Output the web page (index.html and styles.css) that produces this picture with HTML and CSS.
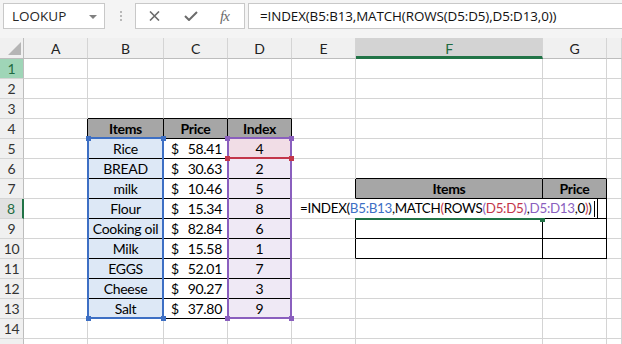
FILE: index.html
```html
<!DOCTYPE html>
<html>
<head>
<title>LOOKUP</title>
<link rel="stylesheet" href="styles.css">
</head>
<body>

<div class="fbar">
  <div class="namebox"><span>LOOKUP</span><span class="caret"></span></div>
  <div class="grip">
    <svg width="3" height="11" viewBox="0 0 3 11"><rect x="0" y="0" width="2" height="2" fill="#b8b8b8"/><rect x="0" y="4" width="2" height="2" fill="#b8b8b8"/><rect x="0" y="8" width="2" height="2" fill="#b8b8b8"/></svg>
  </div>
  <div class="fnbtns">
    <svg class="ico-x" width="11" height="10" viewBox="0 0 11 10"><path d="M1 0.5 L10 9.5 M10 0.5 L1 9.5" stroke="#6b6b6b" stroke-width="1.6" fill="none"/></svg>
    <svg class="ico-ok" width="14" height="10" viewBox="0 0 14 10"><path d="M1 5 L5 9 L13 1" stroke="#6b6b6b" stroke-width="2" fill="none"/></svg>
    <i class="ico-fx">fx</i>
  </div>
  <div class="fxinput">=INDEX(B5:B13,MATCH(ROWS(D5:D5),D5:D13,0))</div>
</div>

<div class="sheet">
  <div class="grid">
    <!-- column headings -->
    <div class="corner"><span class="tri"></span></div>
    <div class="ch">A</div><div class="ch">B</div><div class="ch">C</div><div class="ch">D</div>
    <div class="ch">E</div><div class="ch ch-sel">F</div><div class="ch">G</div><div class="ch"></div>

    <!-- 1 -->
    <div class="rh rh-hl">1</div>
    <div class="c"></div><div class="c"></div><div class="c"></div><div class="c"></div><div class="c"></div><div class="c"></div><div class="c"></div><div class="c"></div>
    <!-- 2 -->
    <div class="rh">2</div>
    <div class="c"></div><div class="c"></div><div class="c"></div><div class="c"></div><div class="c"></div><div class="c"></div><div class="c"></div><div class="c"></div>
    <!-- 3 -->
    <div class="rh">3</div>
    <div class="c"></div><div class="c bb"></div><div class="c bb"></div><div class="c bb"></div><div class="c"></div><div class="c"></div><div class="c"></div><div class="c"></div>
    <!-- 4 -->
    <div class="rh">4</div>
    <div class="c br"></div><div class="c tc th">Items</div><div class="c tc th">Price</div><div class="c tc th">Index</div><div class="c"></div><div class="c"></div><div class="c"></div><div class="c"></div>
    <!-- 5 -->
    <div class="rh">5</div>
    <div class="c br"></div><div class="c tc item">Rice</div><div class="c tc money"><span>$</span><span>58.41</span></div><div class="c tc idx idx-sel">4</div><div class="c"></div><div class="c"></div><div class="c"></div><div class="c"></div>
    <!-- 6 -->
    <div class="rh">6</div>
    <div class="c br"></div><div class="c tc item">BREAD</div><div class="c tc money"><span>$</span><span>30.63</span></div><div class="c tc idx">2</div><div class="c"></div><div class="c bb"></div><div class="c bb"></div><div class="c"></div>
    <!-- 7 -->
    <div class="rh">7</div>
    <div class="c br"></div><div class="c tc item">milk</div><div class="c tc money"><span>$</span><span>10.46</span></div><div class="c tc idx">5</div><div class="c br"></div><div class="c tc th">Items</div><div class="c tc th">Price</div><div class="c"></div>
    <!-- 8 -->
    <div class="rh rh-act">8</div>
    <div class="c br"></div><div class="c tc item">Flour</div><div class="c tc money"><span>$</span><span>15.34</span></div><div class="c tc idx">8</div><div class="c br"></div><div class="c tc"></div><div class="c tc"></div><div class="c"></div>
    <!-- 9 -->
    <div class="rh">9</div>
    <div class="c br"></div><div class="c tc item">Cooking oil</div><div class="c tc money"><span>$</span><span>82.84</span></div><div class="c tc idx">6</div><div class="c br"></div><div class="c tc"></div><div class="c tc"></div><div class="c"></div>
    <!-- 10 -->
    <div class="rh">10</div>
    <div class="c br"></div><div class="c tc item">Milk</div><div class="c tc money"><span>$</span><span>15.58</span></div><div class="c tc idx">1</div><div class="c br"></div><div class="c tc"></div><div class="c tc"></div><div class="c"></div>
    <!-- 11 -->
    <div class="rh">11</div>
    <div class="c br"></div><div class="c tc item">EGGS</div><div class="c tc money"><span>$</span><span>52.01</span></div><div class="c tc idx">7</div><div class="c"></div><div class="c"></div><div class="c"></div><div class="c"></div>
    <!-- 12 -->
    <div class="rh">12</div>
    <div class="c br"></div><div class="c tc item">Cheese</div><div class="c tc money"><span>$</span><span>90.27</span></div><div class="c tc idx">3</div><div class="c"></div><div class="c"></div><div class="c"></div><div class="c"></div>
    <!-- 13 -->
    <div class="rh">13</div>
    <div class="c br"></div><div class="c tc item">Salt</div><div class="c tc money"><span>$</span><span>37.80</span></div><div class="c tc idx">9</div><div class="c"></div><div class="c"></div><div class="c"></div><div class="c"></div>
    <!-- 14 -->
    <div class="rh">14</div>
    <div class="c"></div><div class="c"></div><div class="c"></div><div class="c"></div><div class="c"></div><div class="c"></div><div class="c"></div><div class="c"></div>
    <!-- 15 -->
    <div class="rh">15</div>
    <div class="c"></div><div class="c"></div><div class="c"></div><div class="c"></div><div class="c"></div><div class="c"></div><div class="c"></div><div class="c"></div>
  </div>

  <!-- range highlights while editing -->
  <div class="rng rng-red"></div>
  <div class="rng rng-blue"></div>
  <div class="rng rng-purple"></div>
  <span class="hdl hdl-blue" style="left:86px;top:98px"></span>
  <span class="hdl hdl-blue" style="left:161px;top:98px"></span>
  <span class="hdl hdl-blue" style="left:86px;top:278px"></span>
  <span class="hdl hdl-blue" style="left:161px;top:278px"></span>
  <span class="hdl hdl-purple" style="left:225px;top:98px"></span>
  <span class="hdl hdl-purple" style="left:289px;top:98px"></span>
  <span class="hdl hdl-purple" style="left:225px;top:278px"></span>
  <span class="hdl hdl-purple" style="left:289px;top:278px"></span>
  <span class="hdl hdl-red" style="left:225px;top:118px"></span>
  <span class="hdl hdl-red" style="left:289px;top:118px"></span>

  <div class="active"></div>
  <div class="edit">=INDEX(<span class="r-blue">B5:B13</span>,MATCH<span class="r-red">(</span>ROWS<span class="r-purple">(</span><span class="r-red">D5:D5</span><span class="r-purple">)</span>,<span class="r-purple">D5:D13</span>,0<span class="r-red">)</span>)<span class="cursor"></span></div>
</div>

</body>
</html>
```

FILE: styles.css
```css
* {box-sizing: border-box;}
body {margin: 0; width: 622px; height: 344px; overflow: hidden; background: #fff; font-family: Lato, "Liberation Sans", sans-serif; color: #000;}

.fbar {display: flex; align-items: flex-start; height: 38px; padding: 3px 0 0 3px; background: #f4f4f4; font-family: "Open Sans", "Noto Sans", sans-serif;}
.namebox {width: 102px; height: 26px; background: #fff; border: 1px solid #c8c8c8; display: flex; align-items: center; justify-content: space-between; padding: 0 7px 0 8px; font-size: 13.5px; color: #262626;}
.caret {width: 0; height: 0; border-left: 4px solid transparent; border-right: 4px solid transparent; border-top: 4px solid #808080; margin-top: 1px;}
.grip {width: 30px; height: 26px; display: flex; align-items: center; justify-content: center; padding-left: 2px;}
.fnbtns {width: 110px; height: 26px; background: #fff; border: 1px solid #c8c8c8; display: flex; align-items: center; padding-left: 13px;}
.ico-ok {margin-left: 24px;}
.ico-fx {margin-left: 22px; font-family: "Liberation Serif", serif; font-size: 15px; color: #6b6b6b; letter-spacing: -1px;}
.fxinput {flex: 1; height: 26px; margin-left: 3px; background: #fff; border: 1px solid #c8c8c8; border-right: none; padding-left: 11px; font-size: 13.4px; letter-spacing: -0.1px; line-height: 24px; color: #111; white-space: nowrap;}

.sheet {position: relative;}
.grid {display: grid; grid-template-columns: 24px 64px 76px 64px 64px 64px 187px 64px 1fr; grid-template-rows: 21px repeat(15, 20px); font-size: 14px; letter-spacing: -0.3px;}
.c {border-right: 1px solid #d4d4d4; border-bottom: 1px solid #d4d4d4; display: flex; align-items: center; justify-content: center; line-height: 19px; white-space: nowrap;}
.corner {background: #f0f0f0; border-right: 1px solid #bdbdbd; border-bottom: 1px solid #bdbdbd; position: relative;}
.tri {position: absolute; right: 2px; bottom: 3px; width: 0; height: 0; border-left: 13px solid transparent; border-bottom: 13px solid #b5b5b5;}
.ch {background: #f0f0f0; border-right: 1px solid #d4d4d4; border-bottom: 1px solid #bdbdbd; display: flex; align-items: center; justify-content: center; color: #222;}
.ch-sel {background: #d3d3d3; border-bottom: 3px solid #217346; color: #1e6b41; padding-top: 2px;}
.rh {background: #f0f0f0; border-right: 1px solid #bdbdbd; border-bottom: 1px solid #d4d4d4; display: flex; align-items: center; justify-content: center; color: #333;}
.rh-hl {background: #9fd5b7; color: #1e6b41;}
.rh-act {background: #e1e1e1; border-right: 2px solid #217346; color: #1e6b41;}

.bb {border-bottom-color: #000;}
.br {border-right-color: #000;}
.tc {border-right-color: #000; border-bottom-color: #000;}
.th {background: #a6a6a6; font-weight: bold;}
.item {background: #dde8f6;}
.idx {background: #efe9f5;}
.idx-sel {background: #f1dde6;}
.money {justify-content: space-between; padding: 0 5px 0 7px;}

.rng {position: absolute; border: 2px solid;}
.rng-blue {left: 87px; top: 99px; width: 77px; height: 182px; border-color: #3d6fc4;}
.rng-purple {left: 227px; top: 99px; width: 65px; height: 182px; border-color: #8a5fbe;}
.rng-red {left: 227px; top: 99px; width: 65px; height: 22px; border-color: #c3364a;}
.hdl {position: absolute; width: 5px; height: 5px;}
.hdl-blue {background: #3d6fc4;}
.hdl-purple {background: #8a5fbe;}
.hdl-red {background: #c3364a;}

.active {position: absolute; left: 355px; top: 180px; width: 187px; height: 2px; background: #217346;}
.active::after {content: ""; position: absolute; right: -3px; top: -1px; width: 5px; height: 5px; background: #217346;}
.edit {position: absolute; left: 297px; top: 161px; width: 301px; height: 19px; background: #fff; border-right: 1px solid #000; padding-left: 3px; font-size: 13.4px; letter-spacing: -0.3px; line-height: 19px; white-space: nowrap; display: flex; align-items: center;}
.cursor {display: inline-block; width: 1px; height: 16px; background: #000; margin-left: 2px;}
.r-blue {color: #3d6fc4;}
.r-red {color: #c3364a;}
.r-purple {color: #8a5fbe;}
```
